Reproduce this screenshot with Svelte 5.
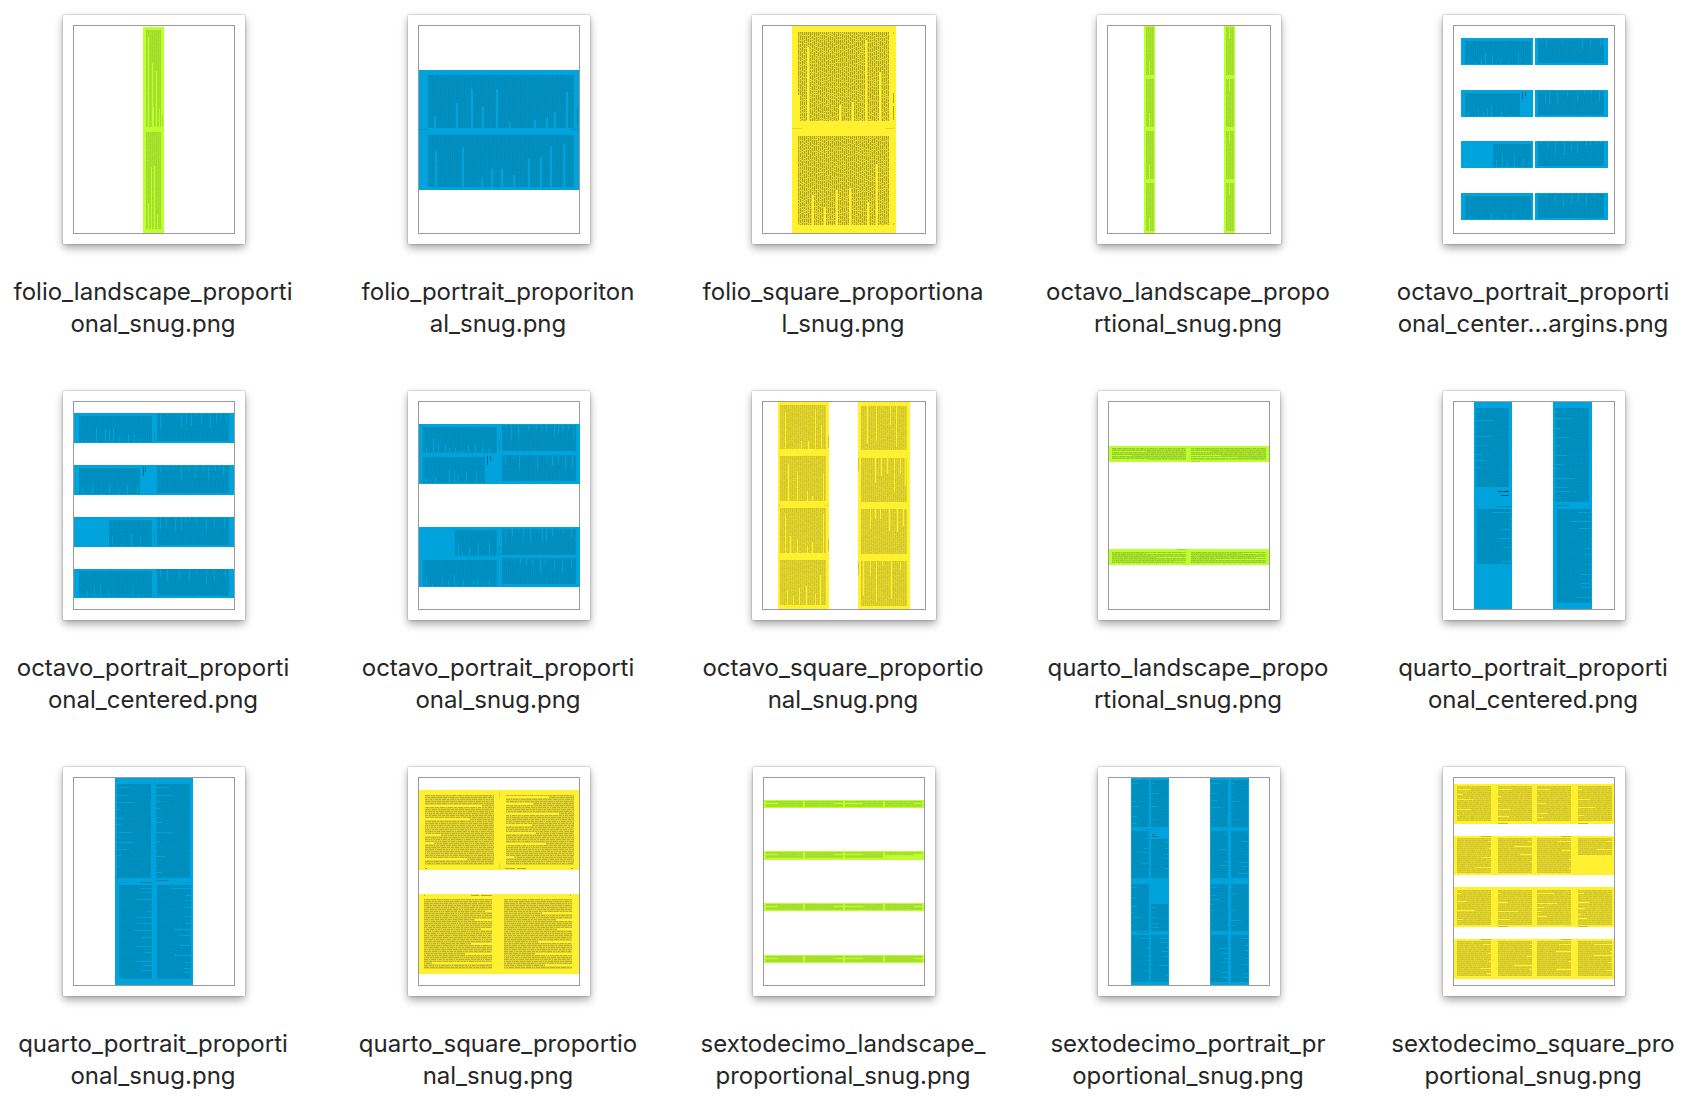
<script>
  const HEIGHT = 229;

  const palettes = {
    green: { panel: '#bdff2e', text: '#a8e32d', ink: '#a0d92b' },
    blue: { panel: '#00a3dc', text: '#0091c3', ink: '#008aba' },
    yellow: { panel: '#fff030', text: '#e0d42d', ink: '#d0c42b' }
  };
  const boldYellow = { panel: '#fff030', text: '#e2d52c', ink: '#aea427' };

  // Small seeded generator, so every thumbnail always gets the same texture.
  function seeded(seed) {
    let s = seed * 7919 + 13;
    return () => {
      s = (s * 1103515245 + 12345) % 2147483648;
      return s / 2147483648;
    };
  }

  // side: edge from which short lines leave a gap (b, t: vertical text; l, r: horizontal text)
  function block(x1, y1, x2, y2, side, gaps) {
    const rnd = seeded(x1 * 31 + y1 * 17 + x2 + y2);
    const vertical = side === 'b' || side === 't';
    const start = vertical ? x1 : y1;
    const end = vertical ? x2 : y2;
    const from = vertical ? y1 : x1;
    const to = vertical ? y2 : x2;
    const len = to - from;
    let ink = '';
    for (let p = start; p < end; p += 2) {
      let q = from;
      while (q < to) {
        const run = Math.min(1 + Math.floor(rnd() * 5), to - q);
        ink += vertical ? `M${p} ${q}h1v${run}h-1z` : `M${q} ${p}h${run}v1h-${run}z`;
        q += run + 1;
      }
    }
    let list = gaps;
    if (!list) {
      list = [];
      for (let p = start + 3; p < end - 2; p += 4 + Math.floor(rnd() * 7)) {
        list.push([p, Math.max(2, Math.floor(len * rnd() * 0.6))]);
      }
    }
    let cut = '';
    for (const [p, n] of list) {
      if (side === 'b') cut += `M${p} ${to - n}h1v${n}h-1z`;
      if (side === 't') cut += `M${p} ${from}h1v${n}h-1z`;
      if (side === 'l') cut += `M${from} ${p}h${n}v1h-${n}z`;
      if (side === 'r') cut += `M${to - n} ${p}h${n}v1h-${n}z`;
    }
    return { x: x1, y: y1, w: x2 - x1, h: y2 - y1, ink, cut };
  }

  const rows = (ys, fn) => ys.flatMap(fn);
  const wide = (list) => list.flatMap(([p, n]) => [[p, n], [p + 1, n]]);

  const files = [
    {
      label: ['folio_landscape_proporti', 'onal_snug.png'],
      width: 182, color: palettes.green,
      panels: [[80, 12, 21, 206]],
      blocks: [
        block(83, 15, 98, 112, 'b', [[85, 90], [89, 64], [90, 20], [93, 56], [96, 18]]),
        block(83, 117, 98, 214, 'b', [[85, 26], [88, 62], [91, 63], [94, 14]])
      ],
      marks: [[99, 100, 1, 11, 0.12]]
    },
    {
      label: ['folio_portrait_proporiton', 'al_snug.png'],
      width: 182, color: palettes.blue,
      panels: [[11, 55, 160, 120]],
      blocks: [
        block(20, 60, 166, 113, 'b', wide([[26, 12], [48, 25], [63, 39], [74, 21], [88, 39], [101, 6], [126, 8], [138, 10], [146, 16], [158, 36]])),
        block(20, 120, 166, 172, 'b', wide([[27, 36], [54, 40], [73, 9], [83, 18], [93, 18], [105, 12], [120, 28], [132, 30], [142, 41], [155, 43]]))
      ],
      marks: [[12, 114, 8, 1, 0.1], [162, 114, 8, 1, 0.1], [169, 92, 1, 20, 0.12]]
    },
    {
      label: ['folio_square_proportiona', 'l_snug.png'],
      width: 184, color: boldYellow,
      panels: [[40, 11, 104, 207]],
      blocks: [
        block(46, 17, 137, 106, 'b', wide([[46, 26], [55, 74], [87, 16], [100, 19], [113, 81], [127, 49]])),
        block(46, 121, 137, 210, 'b', wide([[60, 30], [72, 18], [84, 35], [97, 37], [115, 23], [124, 61]]))
      ],
      marks: [[40, 113, 10, 1, 0.1], [133, 113, 10, 1, 0.1], [141, 78, 1, 10, 0.3], [141, 91, 1, 14, 0.3], [141, 17, 1, 2, 0.2], [141, 208, 1, 2, 0.2]]
    },
    {
      label: ['octavo_landscape_propo', 'rtional_snug.png'],
      width: 184, color: palettes.green,
      panels: [[47, 11, 11, 207], [127, 11, 11, 207]],
      blocks: rows([12, 64, 116, 168], (y) => [
        block(49, y, 57, y + 48, 'b', [[52, 14]]),
        block(129, y, 137, y + 48, 't', [[132, 12]])
      ]),
      marks: []
    },
    {
      label: ['octavo_portrait_proporti', 'onal_center...argins.png'],
      width: 182, color: palettes.blue,
      panels: rows([23, 75, 126, 178], (y) => [[18, y, 72, 27], [92, y, 73, 27]]),
      blocks: rows([23, 75, 126, 178], (y, i) => [
        block(i === 2 ? 50 : 22, y + 3, i === 1 ? 77 : 88, y + 26, 'b'),
        block(95, y + 1, 161, y + 25, 't')
      ]),
      marks: [[79, 77, 1, 7, 0.4], [82, 77, 1, 4, 0.35]]
    },
    {
      label: ['octavo_portrait_proporti', 'onal_centered.png'],
      width: 182, color: palettes.blue,
      panels: [[11, 22, 160, 30], [11, 74, 160, 30], [11, 126, 160, 30], [11, 178, 160, 29]],
      blocks: rows([22, 74, 126, 177], (y, i) => [
        block(i === 2 ? 46 : 16, y + 3, i === 1 ? 77 : 89, y + 29, 'b'),
        block(94, y + 1, 166, y + 28, 't')
      ]),
      marks: [[80, 76, 1, 9, 0.4], [82, 76, 1, 5, 0.35], [91, 40, 1, 10, 0.12], [91, 143, 1, 10, 0.12]]
    },
    {
      label: ['octavo_portrait_proporti', 'onal_snug.png'],
      width: 182, color: palettes.blue,
      panels: [[11, 33, 161, 60], [11, 136, 161, 60]],
      blocks: [
        block(15, 36, 89, 62, 'b'), block(94, 34, 168, 60, 't'),
        block(15, 66, 77, 92, 'b'), block(94, 64, 168, 90, 't'),
        block(47, 139, 89, 165, 'b'), block(94, 138, 168, 164, 't'),
        block(15, 169, 89, 195, 'b'), block(94, 167, 168, 193, 't')
      ],
      marks: [[79, 65, 1, 9, 0.4], [82, 65, 1, 5, 0.35], [91, 50, 1, 10, 0.12], [91, 155, 1, 10, 0.12]]
    },
    {
      label: ['octavo_square_proportio', 'nal_snug.png'],
      width: 184, color: palettes.yellow,
      panels: [[26, 11, 51, 207], [106, 11, 52, 207]],
      blocks: [
        block(28, 14, 74, 58, 'b', [[33, 37], [49, 8], [56, 8], [63, 40], [69, 24]]),
        block(28, 65, 74, 110, 'b', [[36, 37], [45, 29], [55, 10], [60, 5], [71, 27]]),
        block(28, 117, 74, 162, 'b', [[33, 39], [38, 17], [45, 14], [55, 7], [60, 11], [71, 39]]),
        block(28, 169, 74, 214, 'b', [[35, 15], [41, 9], [47, 17], [54, 19], [63, 11], [68, 30]]),
        block(109, 15, 155, 59, 't', [[115, 38], [124, 35], [138, 19], [144, 41]]),
        block(109, 67, 155, 111, 't', [[123, 25], [129, 18], [135, 16], [142, 34], [148, 16], [153, 28]]),
        block(109, 118, 155, 163, 't', [[118, 19], [123, 10], [128, 10], [137, 22], [145, 23], [151, 17]]),
        block(109, 170, 155, 215, 't', [[111, 35], [118, 15], [124, 41], [130, 5], [139, 38], [148, 9]])
      ],
      marks: [[76, 45, 1, 12, 0.18], [76, 148, 1, 12, 0.18], [106, 67, 1, 13, 0.18], [106, 171, 1, 13, 0.18], [26, 114, 5, 1, 0.08], [72, 114, 5, 1, 0.08]]
    },
    {
      label: ['quarto_landscape_propo', 'rtional_snug.png'],
      width: 182, color: { ...palettes.green, ink: '#95ca29' },
      panels: [[11, 55, 160, 16], [11, 158, 160, 16]],
      blocks: [
        block(14, 57, 88, 69, 'l', [[60, 34], [64, 20], [68, 36]]), block(93, 57, 168, 69, 'l', [[60, 20], [64, 30], [66, 46]]),
        block(14, 161, 88, 172, 'r', [[162, 40], [166, 30], [170, 12]]), block(93, 161, 168, 172, 'r', [[162, 24], [166, 10], [168, 50]])
      ],
      marks: [[93, 70, 9, 1, 0.15], [79, 158, 9, 1, 0.15]]
    },
    {
      label: ['quarto_portrait_proporti', 'onal_centered.png'],
      width: 182, color: palettes.blue,
      panels: [[31, 11, 38, 207], [110, 11, 39, 207]],
      blocks: [
        block(33, 17, 66, 96, 'l'), block(34, 118, 68, 173, 'r'),
        block(112, 17, 146, 111, 'l'), block(114, 118, 148, 212, 'r')
      ],
      marks: [[55, 100, 4, 1, 0.5], [60, 100, 6, 1, 0.6], [58, 104, 8, 1, 0.45], [54, 115, 14, 1, 0.18], [34, 115, 1, 1, 0.2], [113, 114, 14, 1, 0.18], [146, 114, 1, 1, 0.2]]
    },
    {
      label: ['quarto_portrait_proporti', 'onal_snug.png'],
      width: 182, color: palettes.blue,
      panels: [[52, 11, 78, 207]],
      blocks: [
        block(54, 17, 88, 111, 'l'), block(93, 17, 127, 111, 'l'),
        block(56, 118, 89, 212, 'r'), block(94, 118, 128, 212, 'r')
      ],
      marks: [[76, 115, 13, 1, 0.2], [93, 113, 13, 1, 0.2], [91, 12, 1, 5, 0.08]]
    },
    {
      label: ['quarto_square_proportio', 'nal_snug.png'],
      width: 182, color: { ...palettes.yellow, ink: '#bdb229' },
      panels: [[11, 23, 160, 80], [11, 127, 160, 80]],
      blocks: [
        block(17, 28, 86, 98, 'l', wide([[38, 57], [51, 45], [67, 16], [75, 9], [91, 42]])),
        block(98, 28, 166, 98, 'l', wide([[29, 43], [36, 27], [46, 53], [57, 26], [65, 30], [76, 40], [89, 8]])),
        block(16, 132, 84, 202, 'r', wide([[143, 7], [152, 17], [161, 11], [176, 21], [186, 27], [195, 60]])),
        block(96, 132, 164, 202, 'r', wide([[145, 30], [152, 16], [161, 15], [174, 34], [186, 37], [197, 27]]))
      ],
      marks: [[17, 101, 2, 1, 0.3], [97, 101, 10, 1, 0.3], [109, 101, 9, 1, 0.3], [163, 101, 2, 1, 0.3], [16, 128, 1, 1, 0.3], [63, 128, 8, 1, 0.3], [73, 128, 11, 1, 0.3], [162, 128, 1, 1, 0.3], [91, 24, 1, 7, 0.1], [91, 96, 1, 7, 0.1]]
    },
    {
      label: ['sextodecimo_landscape_', 'proportional_snug.png'],
      width: 182, color: palettes.green,
      panels: [[11, 33, 160, 8], [11, 84, 160, 9], [11, 136, 160, 8], [11, 188, 160, 8]],
      blocks: rows([33, 84, 136, 188], (y, i) => [
        block(13, y + 1, 50, y + 7, 'l', [[y + 3, 12]]),
        block(52, y + 1, 90, y + 7, 'r', [[y + 3, 9]]),
        block(92, y + 1, 130, y + 7, 'l', [[y + 3, 18]]),
        block(132, y + 1, 169, i === 1 ? y + 4 : y + 7, 'r', [[y + 3, 8]])
      ]),
      marks: []
    },
    {
      label: ['sextodecimo_portrait_pr', 'oportional_snug.png'],
      width: 182, color: palettes.blue,
      panels: [[33, 11, 38, 207], [112, 11, 39, 207]],
      blocks: rows([13, 64, 117, 168], (y, i) => [
        block(34, y, 51, y + 47, i % 2 ? 'r' : 'l'),
        block(53, y + [0, 8, 20, 0][i], 70, y + 47, i % 2 ? 'r' : 'l'),
        block(113, y, 130, y + 47, i % 2 ? 'r' : 'l'),
        block(133, y, 150, y + 47, i % 2 ? 'r' : 'l')
      ]),
      marks: [[54, 67, 3, 1, 0.35], [54, 69, 6, 1, 0.35], [45, 62, 12, 1, 0.12], [39, 165, 12, 1, 0.12], [122, 62, 8, 1, 0.08]]
    },
    {
      label: ['sextodecimo_square_pro', 'portional_snug.png'],
      width: 182, color: palettes.yellow,
      panels: [[11, 17, 160, 40], [11, 69, 160, 39], [11, 120, 160, 40], [11, 172, 160, 40]],
      blocks: rows([19, 71, 123, 174], (y, i) =>
        [14, 55, 94, 135].map((x, k) =>
          block(x, y, x + 34, i === 1 && k === 3 ? y + 17 : y + 35, i % 2 ? 'r' : 'l')
        )
      ),
      marks: rows([56, 159], (y) => [[55, y, 10, 1, 0.2], [135, y, 10, 1, 0.2]]).concat(
        rows([69, 172], (y) => [[38, y, 10, 1, 0.2], [118, y, 10, 1, 0.2]])
      )
    }
  ];
</script>

<main>
  <ul class="files">
    {#each files as file}
      <li>
        <figure>
          <svg class="sheet" width={file.width} height={HEIGHT} viewBox="0 0 {file.width} {HEIGHT}" shape-rendering="crispEdges" aria-hidden="true">
            <rect x="10" y="10" width={file.width - 20} height="209" fill="#999999" />
            <rect x="11" y="11" width={file.width - 22} height="207" fill="#ffffff" />
            {#each file.panels as [x, y, w, h]}
              <rect {x} {y} width={w} height={h} fill={file.color.panel} />
            {/each}
            {#each file.blocks as b}
              <rect x={b.x} y={b.y} width={b.w} height={b.h} fill={file.color.text} />
              <path d={b.ink} fill={file.color.ink} />
              <path d={b.cut} fill={file.color.panel} />
            {/each}
            {#each file.marks as [x, y, w, h, o]}
              <rect {x} {y} width={w} height={h} fill="#000000" opacity={o} />
            {/each}
          </svg>
          <figcaption>
            {#each file.label as line}
              <span>{line}</span>
            {/each}
          </figcaption>
        </figure>
      </li>
    {/each}
  </ul>
</main>

<style>
  :global(body) {
    margin: 0;
    background: #ffffff;
  }

  main {
    padding: 15px 17px 12px 11px;
    font-family: Inter, 'Liberation Sans', sans-serif;
    font-size: 24px;
    line-height: 32px;
    color: #262626;
  }

  .files {
    display: grid;
    grid-template-columns: repeat(5, 286px);
    justify-content: space-between;
    row-gap: 51px;
    margin: 0;
    padding: 0;
    list-style: none;
  }

  figure {
    display: flex;
    flex-direction: column;
    align-items: center;
    gap: 32px;
    margin: 0;
  }

  .sheet {
    display: block;
    background: #ffffff;
    border-radius: 1px;
    box-shadow:
      0 0 2px rgba(0, 0, 0, 0.4),
      0 4px 8px rgba(0, 0, 0, 0.35);
  }

  figcaption {
    padding-right: 2px;
    text-align: center;
    white-space: nowrap;
  }

  span {
    display: block;
  }
</style>
